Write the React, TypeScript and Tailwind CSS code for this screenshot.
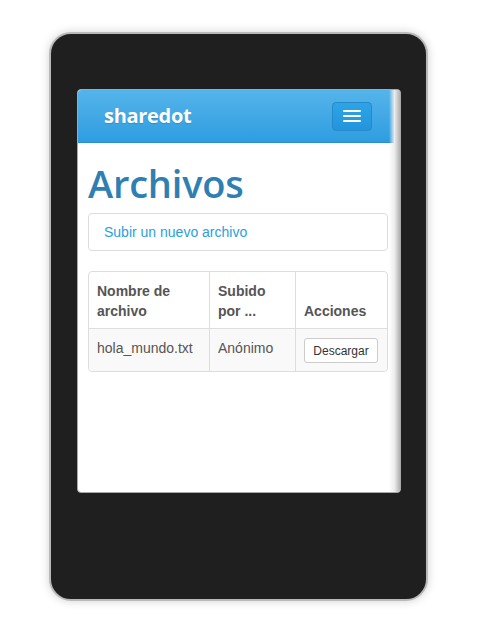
const App = () => {
  return (
    <div className="w-[500px] h-[640px] bg-white pt-[32px] pl-[49px]" style={{ fontFamily: '"Liberation Sans", Arial, sans-serif' }}>
      {/* Device frame */}
      <div className="w-[379px] h-[569px] rounded-[22px] border-2 border-[#b9b9b9] bg-[#1f1f1f] shadow-[0_0_10px_rgba(0,0,0,0.18)] pt-[55px] pl-[26px]">
        {/* Screen */}
        <div className="relative w-[324px] h-[404px] rounded-[4px] border border-[#a8a8a8] bg-white overflow-hidden">
          {/* Navbar */}
          <div className="h-[53px] rounded-t-[3px] border-b border-[#2a8fd0] bg-gradient-to-b from-[#54b4ea] to-[#2d9de0] flex items-center justify-between pl-[26px] pr-[28px]">
            <span className="text-white text-[20px] font-bold tracking-[-0.3px] [text-shadow:0_1px_1px_rgba(0,0,0,0.15)]" style={{ fontFamily: '"Open Sans", "Noto Sans", sans-serif' }}>
              sharedot
            </span>
            <button className="w-[40px] h-[29px] rounded-[4px] border border-[#2689c9] bg-gradient-to-b from-[#2ea3e6] to-[#2395dc] flex flex-col items-center justify-center gap-[3px]">
              <span className="block w-[18px] h-[2px] bg-white rounded-[1px]" />
              <span className="block w-[18px] h-[2px] bg-white rounded-[1px]" />
              <span className="block w-[18px] h-[2px] bg-white rounded-[1px]" />
            </button>
          </div>

          {/* Content */}
          <div className="pl-[10px] pr-[12px]">
            <h1 className="text-[#2f80b2] text-[38px] font-semibold leading-none mt-[21px] mb-[11px] tracking-[-0.2px]" style={{ fontFamily: '"Open Sans", "Noto Sans", sans-serif' }}>
              Archivos
            </h1>

            <div className="border border-[#dddddd] rounded-[4px] h-[38px] flex items-center pl-[15px]">
              <span className="text-[#2aa0dd] text-[14px]">Subir un nuevo archivo</span>
            </div>

            <table className="mt-[20px] w-full table-fixed border-separate border-spacing-0 border border-[#dddddd] rounded-[4px] text-[14px] text-[#555555] leading-[20px]">
              <thead>
                <tr>
                  <th className="w-[120px] text-left font-bold align-bottom px-[8px] pt-[9px] pb-[7px]">Nombre de archivo</th>
                  <th className="w-[86px] text-left font-bold align-bottom px-[8px] pt-[9px] pb-[7px] border-l border-[#dddddd]">Subido por ...</th>
                  <th className="text-left font-bold align-bottom px-[8px] pt-[9px] pb-[7px] border-l border-[#dddddd]">Acciones</th>
                </tr>
              </thead>
              <tbody className="bg-[#f9f9f9]">
                <tr>
                  <td className="align-top px-[8px] pt-[9px] pb-[7px] border-t border-[#dddddd] rounded-bl-[4px]">hola_mundo.txt</td>
                  <td className="align-top px-[8px] pt-[9px] pb-[7px] border-t border-l border-[#dddddd]">Anónimo</td>
                  <td className="align-top px-[8px] pt-[9px] pb-[8px] border-t border-l border-[#dddddd] rounded-br-[4px]">
                    <button className="h-[25px] w-[74px] bg-white border border-[#cccccc] rounded-[3px] text-[12px] text-[#333333] leading-none">
                      Descargar
                    </button>
                  </td>
                </tr>
              </tbody>
            </table>
          </div>

          {/* Right-edge inner shade */}
          <div className="absolute top-0 right-0 w-[11px] h-full bg-gradient-to-r from-transparent via-[#ececec] to-[#b0b0b0] pointer-events-none" />
        </div>
      </div>
    </div>
  );
};

export default App;
